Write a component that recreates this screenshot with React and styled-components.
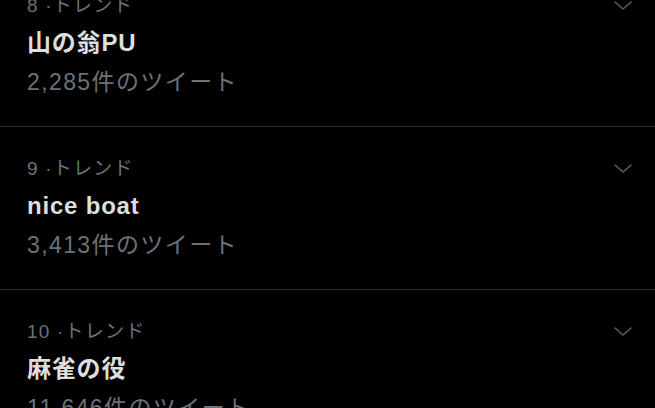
import React from 'react'
import styled, { createGlobalStyle } from 'styled-components'

const GlobalStyle = createGlobalStyle`
  html, body {
    margin: 0;
    padding: 0;
    background: #000;
    overflow: hidden;
  }
  body {
    font-family: "Liberation Sans", "Noto Sans CJK JP", sans-serif;
  }
`

const trends = [
  { rank: 8, title: '山の翁PU', count: '2,285' },
  { rank: 9, title: 'nice boat', count: '3,413' },
  { rank: 10, title: '麻雀の役', count: '11,646' },
]

export default function App() {
  return (
    <>
      <GlobalStyle />
      <Page>
        <List>
          {trends.map((t) => (
            <Row key={t.rank}>
              <Info>
                <Meta>{t.rank} ·トレンド</Meta>
                <Title>{t.title}</Title>
                <Count>{t.count}件のツイート</Count>
              </Info>
              <Chevron width="18" height="9" viewBox="0 0 18 9">
                <path d="M1 1 L9 8 L17 1" fill="none" stroke="#5b6167" strokeWidth="1.5" strokeLinecap="round" strokeLinejoin="round" />
              </Chevron>
            </Row>
          ))}
        </List>
      </Page>
    </>
  )
}

const Page = styled.div`
  width: 655px;
  height: 408px;
  background: #000;
  overflow: hidden;
`

const List = styled.div`
  display: flex;
  flex-direction: column;
  margin-top: -36px;
`

const Row = styled.div`
  display: flex;
  align-items: flex-start;
  justify-content: space-between;
  padding: 22px 23px 26px 27px;
  border-bottom: 1px solid #2a2d30;
`

const Info = styled.div`
  display: flex;
  flex-direction: column;
`

const Meta = styled.div`
  height: 38px;
  line-height: 40px;
  font-size: 19px;
  letter-spacing: 1.2px;
  color: #6b7278;
`

const Title = styled.div`
  height: 38px;
  line-height: 38px;
  font-size: 24px;
  font-weight: 700;
  letter-spacing: 0.8px;
  color: #dedede;
`

const Count = styled.div`
  height: 38px;
  line-height: 40px;
  font-size: 23px;
  letter-spacing: 1.4px;
  color: #6b7278;
`

const Chevron = styled.svg`
  display: block;
  margin-top: 15px;
`
